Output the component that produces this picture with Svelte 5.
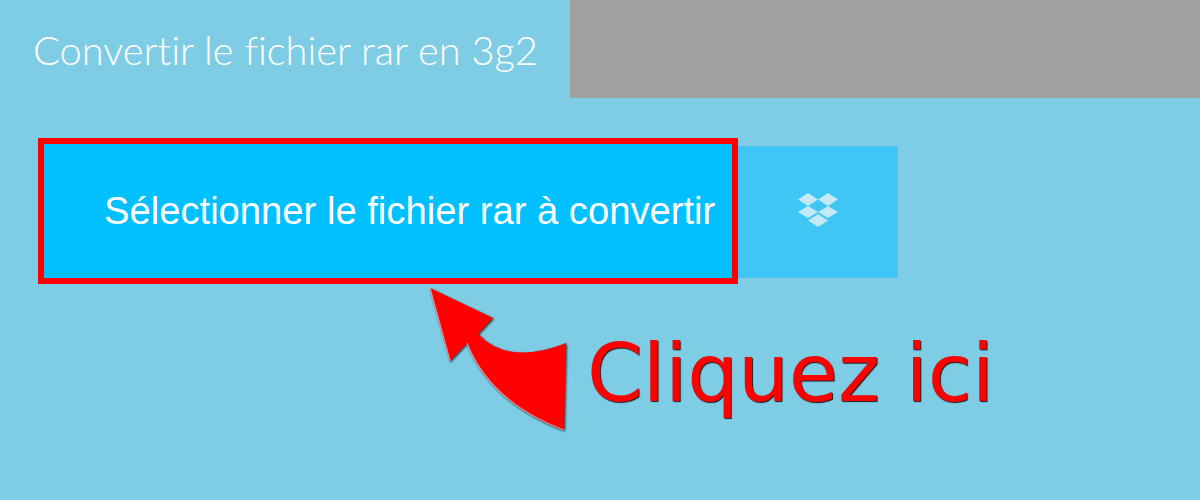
<script>
	let title = 'Convertir le fichier rar en 3g2';
	let label = 'Sélectionner le fichier rar à convertir';
</script>

<style>
	:global(body) {
		margin: 0;
		background: #7fcce5;
	}

	.page {
		position: relative;
		height: 500px;
		overflow: hidden;
		background: #7fcce5;
		font-family: "Liberation Sans", Arial, sans-serif;
	}

	.top {
		display: flex;
		height: 98px;
	}

	.title {
		width: 570px;
		box-sizing: border-box;
		padding: 25px 0 0 33px;
		margin: 0;
		color: #fff;
		font-family: "Lato", sans-serif;
		font-size: 39.8px;
		font-weight: 300;
		font-variant-ligatures: none;
		line-height: 50px;
		white-space: nowrap;
	}

	.gap {
		flex: 1;
		background: #a0a0a0;
	}

	.actions {
		display: flex;
		align-items: center;
		margin: 40px 0 0 38px;
	}

	.pick {
		width: 700px;
		height: 146px;
		box-sizing: border-box;
		border: 6px solid #ff0000;
		padding: 0 0 0 60px;
		background: #00c0ff;
		color: #fff;
		font-family: inherit;
		font-size: 38.2px;
		text-align: left;
		white-space: nowrap;
	}

	.dropbox {
		display: flex;
		align-items: center;
		justify-content: center;
		width: 160px;
		height: 132px;
		margin-top: 2px;
		border: 0;
		padding: 0 0 5px;
		background: #40c6f4;
	}

	.arrow {
		position: absolute;
		left: 420px;
		top: 280px;
		filter: drop-shadow(1px 1px 1px rgba(0, 0, 0, 0.75));
	}

	.hint {
		position: absolute;
		left: 587px;
		top: 328px;
		color: #ff0000;
		font-family: "DejaVu Sans", sans-serif;
		font-size: 80px;
		line-height: 92px;
		white-space: nowrap;
		text-shadow: 1px 1px 1px rgba(0, 0, 0, 0.85);
	}
</style>

<div class="page">
	<div class="top">
		<h1 class="title">{title}</h1>
		<div class="gap"></div>
	</div>

	<div class="actions">
		<button class="pick">{label}</button>
		<button class="dropbox" aria-label="Dropbox">
			<svg width="40" height="34" viewBox="0 0 40 34" fill="#c4e8f6">
				<polygon points="0,6.5 10,0 20,6.5 10,13" />
				<polygon points="20,6.5 30,0 40,6.5 30,13" />
				<polygon points="0,19 10,13 20,19 10,25" />
				<polygon points="20,19 30,13 40,19 30,25" />
				<polygon points="10,27.5 20,21 30,27.5 20,34" />
			</svg>
		</button>
	</div>

	<svg class="arrow" width="160" height="160" viewBox="420 280 160 160">
		<path d="M430 288 L493 318 L478 334 Q508 366 566 343 L564 430 Q490 402 467 343 L450 361 Z" fill="#ff0000" />
		<path d="M430 288 L450 361 M467 343 Q490 402 564 430" fill="none" stroke="#f58a92" stroke-width="1.2" />
	</svg>
	<div class="hint">Cliquez ici</div>
</div>
